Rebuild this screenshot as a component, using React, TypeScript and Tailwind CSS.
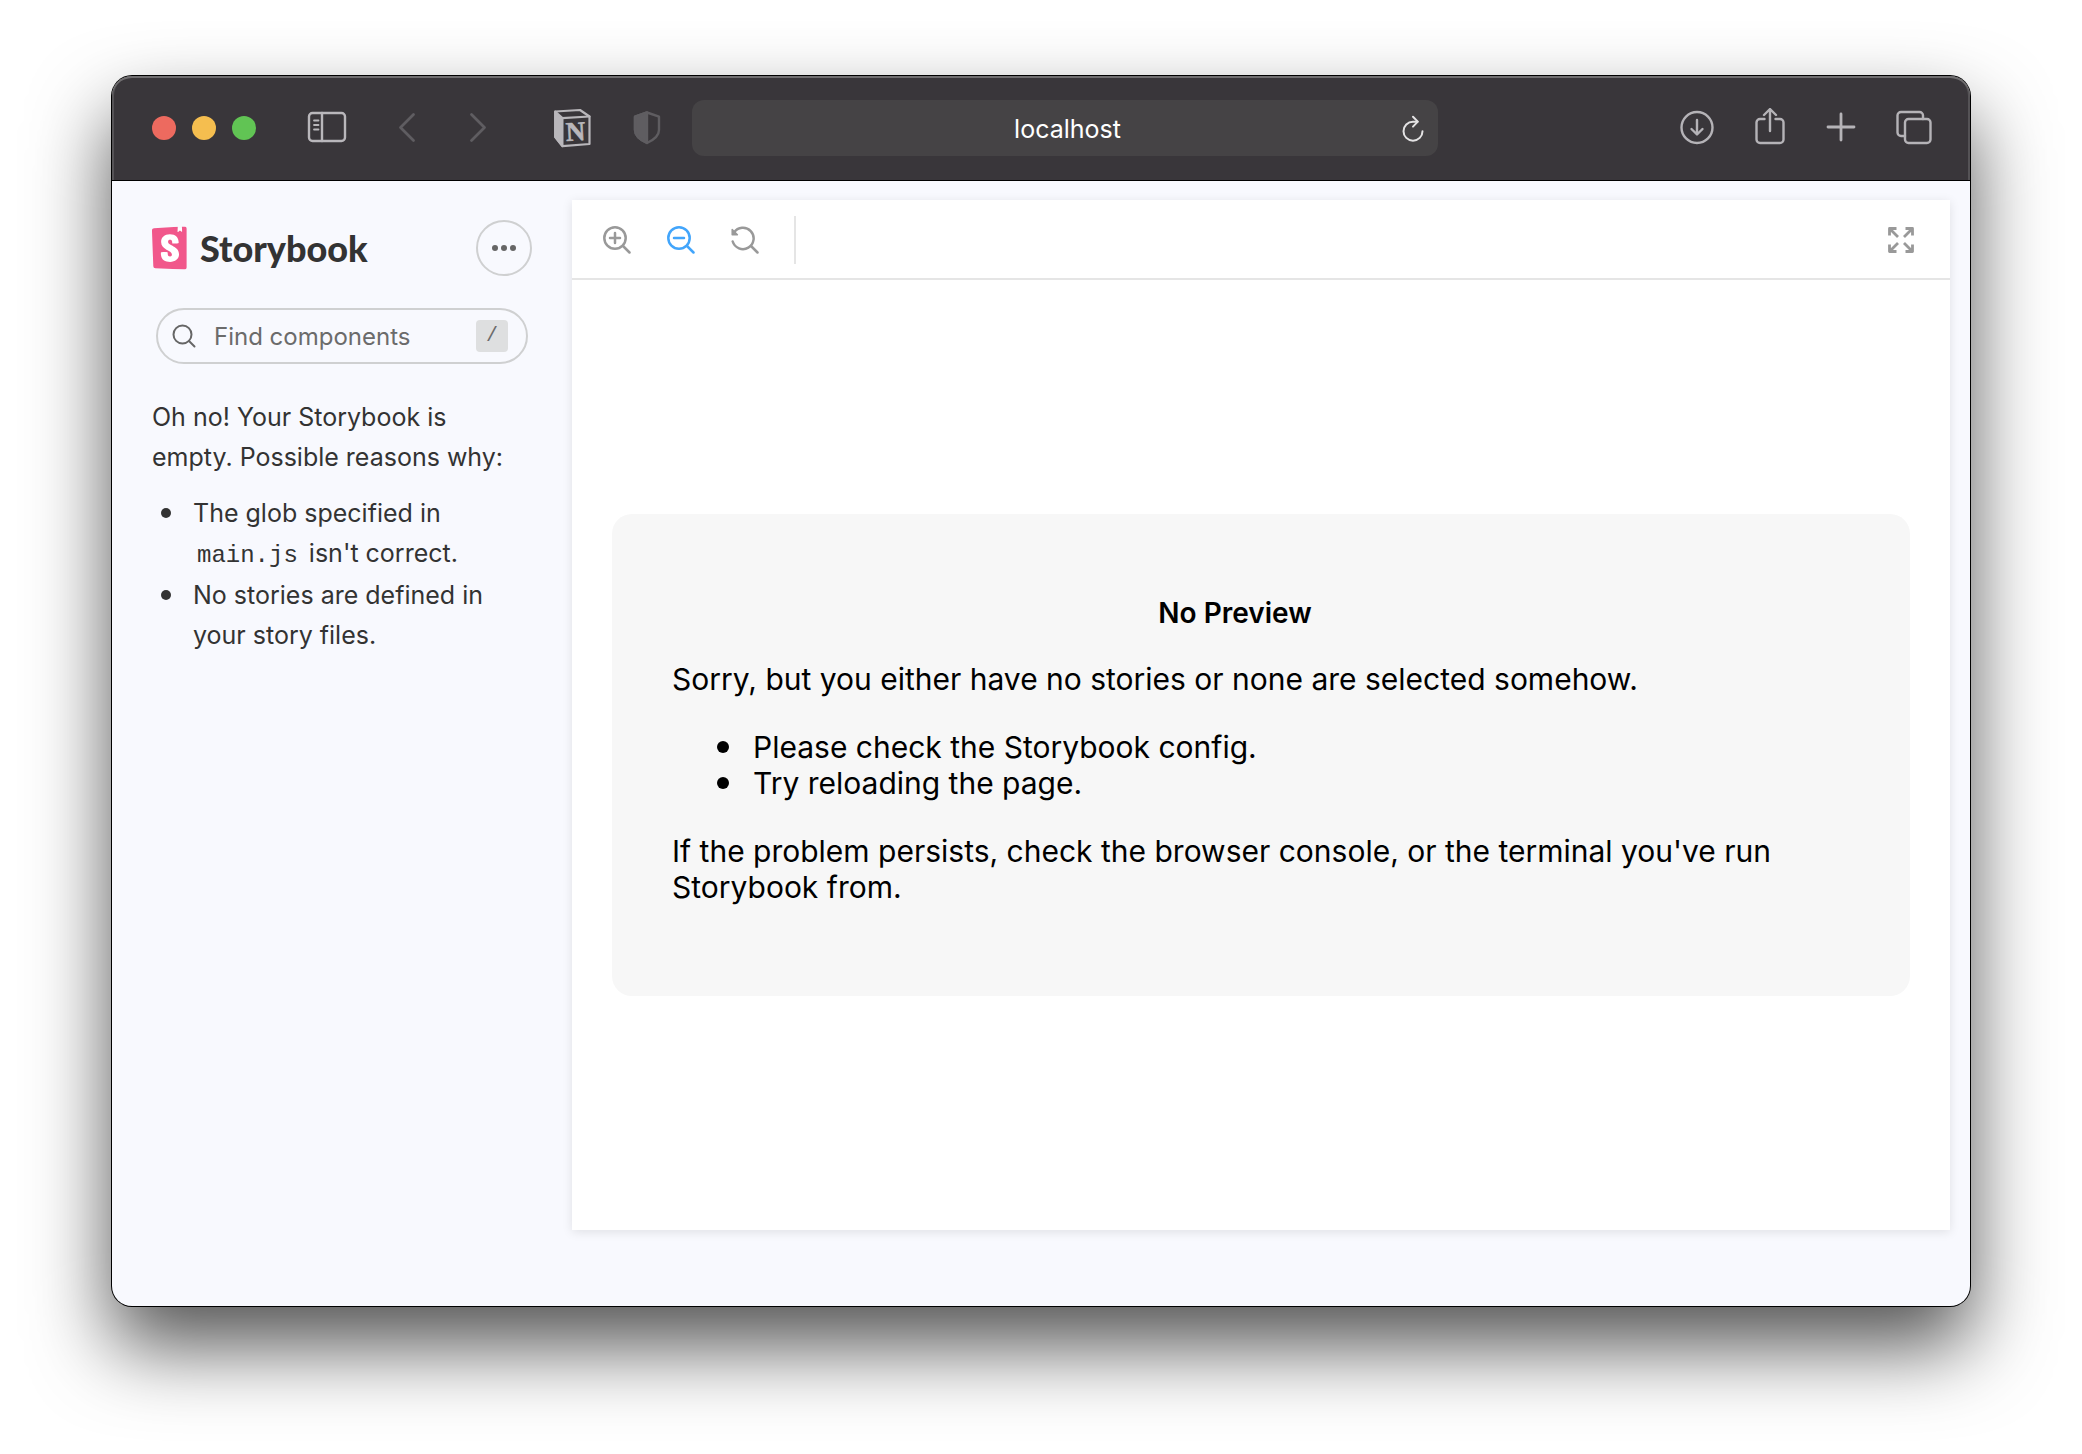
import type { ReactNode } from "react";
import { SiStorybook } from "react-icons/si";

type IconButtonProps = {
  label: string;
  className?: string;
  children: ReactNode;
};

function ChromeButton({ label, className = "text-[#b5b3b7]", children }: IconButtonProps) {
  return (
    <button type="button" aria-label={label} className={`flex h-10 shrink-0 items-center justify-center ${className}`}>
      <svg
        viewBox="0 0 40 40"
        className="size-10"
        fill="none"
        stroke="currentColor"
        strokeWidth="2.4"
        strokeLinecap="round"
        strokeLinejoin="round"
        aria-hidden="true"
      >
        {children}
      </svg>
    </button>
  );
}

function ToolButton({ label, className = "text-[#999999]", children }: IconButtonProps) {
  return (
    <button type="button" aria-label={label} className={`flex size-7 items-center justify-center ${className}`}>
      <svg
        viewBox="0 0 28 28"
        className="size-7"
        fill="none"
        stroke="currentColor"
        strokeWidth="2.5"
        strokeLinecap="round"
        strokeLinejoin="round"
        aria-hidden="true"
      >
        {children}
      </svg>
    </button>
  );
}

function TitleBar() {
  return (
    <header className="flex h-[105px] items-center rounded-t-[20px] border-b border-black bg-[#39363a] pr-5 pl-10 shadow-[inset_0_2px_0_#706e70,inset_2px_0_0_#555356,inset_-2px_0_0_#555356]">
      <div className="flex gap-4">
        <button type="button" aria-label="Close" className="size-6 rounded-full bg-[#ed6a5f]" />
        <button type="button" aria-label="Minimize" className="size-6 rounded-full bg-[#f5be4f]" />
        <button type="button" aria-label="Zoom window" className="size-6 rounded-full bg-[#61c454]" />
      </div>
      <ChromeButton label="Show sidebar" className="ml-[51px] text-[#b9b7bb]">
        <rect x="2" y="5" width="36" height="28" rx="3.5" />
        <path d="M15 5v28" />
        <path d="M7 12.5h4.500M7 17h4.500M7 21.500h4.500" strokeWidth="1.800" />
      </ChromeButton>
      <ChromeButton label="Back" className="ml-10 text-[#5f5d61]">
        <path d="M26.500 6.500L13.500 19.500l13 13" strokeWidth="2.800" />
      </ChromeButton>
      <ChromeButton label="Forward" className="ml-8 text-[#5f5d61]">
        <path d="M12.500 6.500l13 13-13 13" strokeWidth="2.800" />
      </ChromeButton>
      <ChromeButton label="Notion" className="ml-[54px] text-[#b9b7bb]">
        <path d="M2.200 3.500L27 2l9.500 6.500v27.500L9.500 38.200 2.200 29z" strokeWidth="2.200" />
        <path d="M2.200 3.500L9.500 10v28.200L2.200 29z" fill="currentColor" strokeWidth="2" />
        <path d="M9 10.200L36.500 8.500" strokeWidth="2.200" />
        <text
          x="22.5"
          y="32.5"
          textAnchor="middle"
          fill="currentColor"
          strokeWidth="0.600"
          transform="rotate(-3 23 24)"
          className="font-['Liberation_Serif'] text-[27px] font-bold"
        >
          N
        </text>
      </ChromeButton>
      <ChromeButton label="Privacy report" className="ml-[34px] text-[#5f5d61]">
        <path d="M20 4.500l12 4.200v13.300c0 6.500-6.500 10.500-12 13-5.500-2.500-12-6.500-12-13V8.700z" />
        <path d="M20 4.500v30.500c-5.500-2.500-12-6.500-12-13V8.700z" fill="currentColor" />
      </ChromeButton>
      <div className="ml-[25px] flex h-14 flex-1 items-center rounded-xl bg-[#454345] pr-[11px] pl-11">
        <input
          type="text"
          aria-label="Address"
          defaultValue="localhost"
          className="min-w-0 flex-1 bg-transparent pt-0.5 text-center text-[25px] leading-8 text-white outline-none"
        />
        <button type="button" aria-label="Reload" className="flex size-7 items-center justify-center text-[#e4e3e4]">
          <svg
            viewBox="0 0 28 28"
            className="size-7"
            fill="none"
            stroke="currentColor"
            strokeWidth="2"
            strokeLinecap="round"
            strokeLinejoin="round"
            aria-hidden="true"
          >
            <path d="M23.500 17.200a9.500 9.500 0 1 1-9.500-9.500h4.500" />
            <path d="M14 2.700l4.800 4.900-4.800 5" />
          </svg>
        </button>
      </div>
      <div className="ml-[224px] flex">
        <ChromeButton label="Downloads" className="w-[72px] text-[#b5b3b7]">
          <circle cx="19" cy="19.500" r="15.500" />
          <path d="M19 12v14M13.500 21l5.500 5.500 5.500-5.500" />
        </ChromeButton>
        <ChromeButton label="Share" className="w-[72px] text-[#b5b3b7]">
          <path d="M14.500 11H10a3.500 3.500 0 0 0-3.500 3.500v17A3.500 3.500 0 0 0 10 35h20a3.500 3.500 0 0 0 3.500-3.500v-17A3.500 3.500 0 0 0 30 11h-4.500" />
          <path d="M20 23V1.500M14 7l6-6 6 6" />
        </ChromeButton>
        <ChromeButton label="New tab" className="w-[72px] text-[#b5b3b7]">
          <path d="M19 6v26M6 19h26" strokeWidth="2.800" />
        </ChromeButton>
        <ChromeButton label="Tab overview" className="w-[72px] text-[#b5b3b7]">
          <rect x="11" y="11" width="25.500" height="24" rx="3.500" />
          <path d="M11 28H7a3.500 3.500 0 0 1-3.500-3.500v-17A3.500 3.500 0 0 1 7 4h18.500A3.500 3.500 0 0 1 29 7.500V11" />
        </ChromeButton>
      </div>
    </header>
  );
}

function Sidebar() {
  return (
    <aside className="w-[460px] shrink-0 px-10 pt-5 text-[#333333]">
      <div className="flex items-center justify-between">
        <a href="#home" className="flex items-center gap-3">
          <svg viewBox="2.4 0 20 24" className="h-11 w-9" aria-hidden="true">
            <rect x="5" y="1" width="15" height="20" fill="white" />
            <SiStorybook width="24" height="24" size={24} color="#f1578b" />
          </svg>
          <span className="font-[Lato] text-[36px] leading-10 font-black">Storybook</span>
        </a>
        <button
          type="button"
          aria-label="Shortcuts"
          className="flex size-14 items-center justify-center gap-[3px] rounded-full border-2 border-[#cfd0d1]"
        >
          <span className="size-[6px] rounded-full bg-[#666666]" />
          <span className="size-[6px] rounded-full bg-[#666666]" />
          <span className="size-[6px] rounded-full bg-[#666666]" />
        </button>
      </div>

      <label className="mx-1 mt-8 flex h-14 items-center rounded-full border-2 border-[#cfd0d1] pr-[18px] pl-[14px]">
        <svg
          viewBox="0 0 24 24"
          className="size-6 shrink-0 text-[#666666]"
          fill="none"
          stroke="currentColor"
          strokeWidth="2"
          strokeLinecap="round"
          aria-hidden="true"
        >
          <circle cx="10.500" cy="10.500" r="9" />
          <path d="M17 17l5.500 5.500" />
        </svg>
        <input
          type="search"
          aria-label="Find components"
          placeholder="Find components"
          className="ml-[18px] min-w-0 flex-1 bg-transparent pt-0.5 text-[24px] leading-8 outline-none placeholder:text-[#6b6b6b]"
        />
        <kbd className="flex size-8 items-center justify-center rounded bg-[#dedfe0] font-['Liberation_Mono'] text-[20px] text-[#6b6b6b]">
          /
        </kbd>
      </label>

      <div className="mt-[33px] text-[25px] leading-10">
        <p>
          Oh no! Your Storybook is
          <br />
          empty. Possible reasons why:
        </p>
        <ul className="mt-4 flex flex-col gap-[2px] pl-[9px]">
          <li className="flex before:mt-[15px] before:mr-[22px] before:size-[10px] before:shrink-0 before:rounded-full before:bg-[#333333]">
            <span>
              The glob specified in
              <br />
              <code className="mx-1 font-['Liberation_Mono'] text-[24px] leading-none">main.js</code> isn't correct.
            </span>
          </li>
          <li className="flex before:mt-[15px] before:mr-[22px] before:size-[10px] before:shrink-0 before:rounded-full before:bg-[#333333]">
            <span>No stories are defined in your story files.</span>
          </li>
        </ul>
      </div>
    </aside>
  );
}

function Preview() {
  return (
    <main className="flex flex-1 flex-col bg-white shadow-[0_2px_10px_rgba(0,0,0,0.1)]">
      <div className="flex h-20 items-center border-b-2 border-[#e5e5e5] pt-0.5 pr-[35px] pl-[31px]">
        <div className="flex gap-9">
          <ToolButton label="Zoom in">
            <circle cx="12" cy="12" r="10.700" />
            <path d="M20 20l6.500 6.500M12 7v10M7 12h10" />
          </ToolButton>
          <ToolButton label="Zoom out" className="text-[#42a5fb]">
            <circle cx="12" cy="12" r="10.700" />
            <path d="M20 20l6.500 6.500M7 12h10" />
          </ToolButton>
          <ToolButton label="Reset zoom">
            <path d="M3 6.500A10.700 10.700 0 1 1 1.700 15.500" />
            <path d="M20 20l6.500 6.500" />
            <path d="M1.200 3.500v5.200h5.200z" fill="currentColor" strokeWidth="1.500" />
          </ToolButton>
        </div>
        <span className="ml-[35px] h-12 w-[2px] bg-[#e5e5e5]" />
        <div className="ml-auto flex">
          <ToolButton label="Go full screen">
            <path
              d="M2.500 9.500v-7h7M4 4l7 7M18.500 2.500h7v7M24 4l-7 7M2.500 18.500v7h7M4 24l7-7M25.500 18.500v7h-7M24 24l-7-7"
              strokeWidth="2.800"
              strokeLinecap="butt"
            />
          </ToolButton>
        </div>
      </div>
      <div className="flex flex-1 flex-col justify-center px-10">
        <section className="rounded-[20px] bg-[#f7f7f7] pt-[81px] pr-28 pb-[91px] pl-[60px] text-[30px] leading-9 text-black">
          <h1 className="text-center text-[28px] font-semibold">No Preview</h1>
          <p className="mt-[30px]">Sorry, but you either have no stories or none are selected somehow.</p>
          <ul className="mt-8 pl-[45px]">
            <li className="flex items-center gap-6 before:size-3 before:rounded-full before:bg-black">
              Please check the Storybook config.
            </li>
            <li className="flex items-center gap-6 before:size-3 before:rounded-full before:bg-black">
              Try reloading the page.
            </li>
          </ul>
          <p className="mt-8">
            If the problem persists, check the browser console, or the terminal you've run Storybook from.
          </p>
        </section>
      </div>
    </main>
  );
}

export default function App() {
  return (
    <div className="flex min-h-screen flex-col bg-white px-28 pt-[76px] pb-[148px] font-[Inter,sans-serif]">
      <div className="flex flex-1 flex-col rounded-[20px] bg-[#f8f9fe] shadow-[0_0_0_1px_#000000,0_40px_80px_rgba(0,0,0,0.68)]">
        <TitleBar />
        <div className="flex flex-1 pt-[19px] pr-5 pb-[76px]">
          <Sidebar />
          <Preview />
        </div>
      </div>
    </div>
  );
}
